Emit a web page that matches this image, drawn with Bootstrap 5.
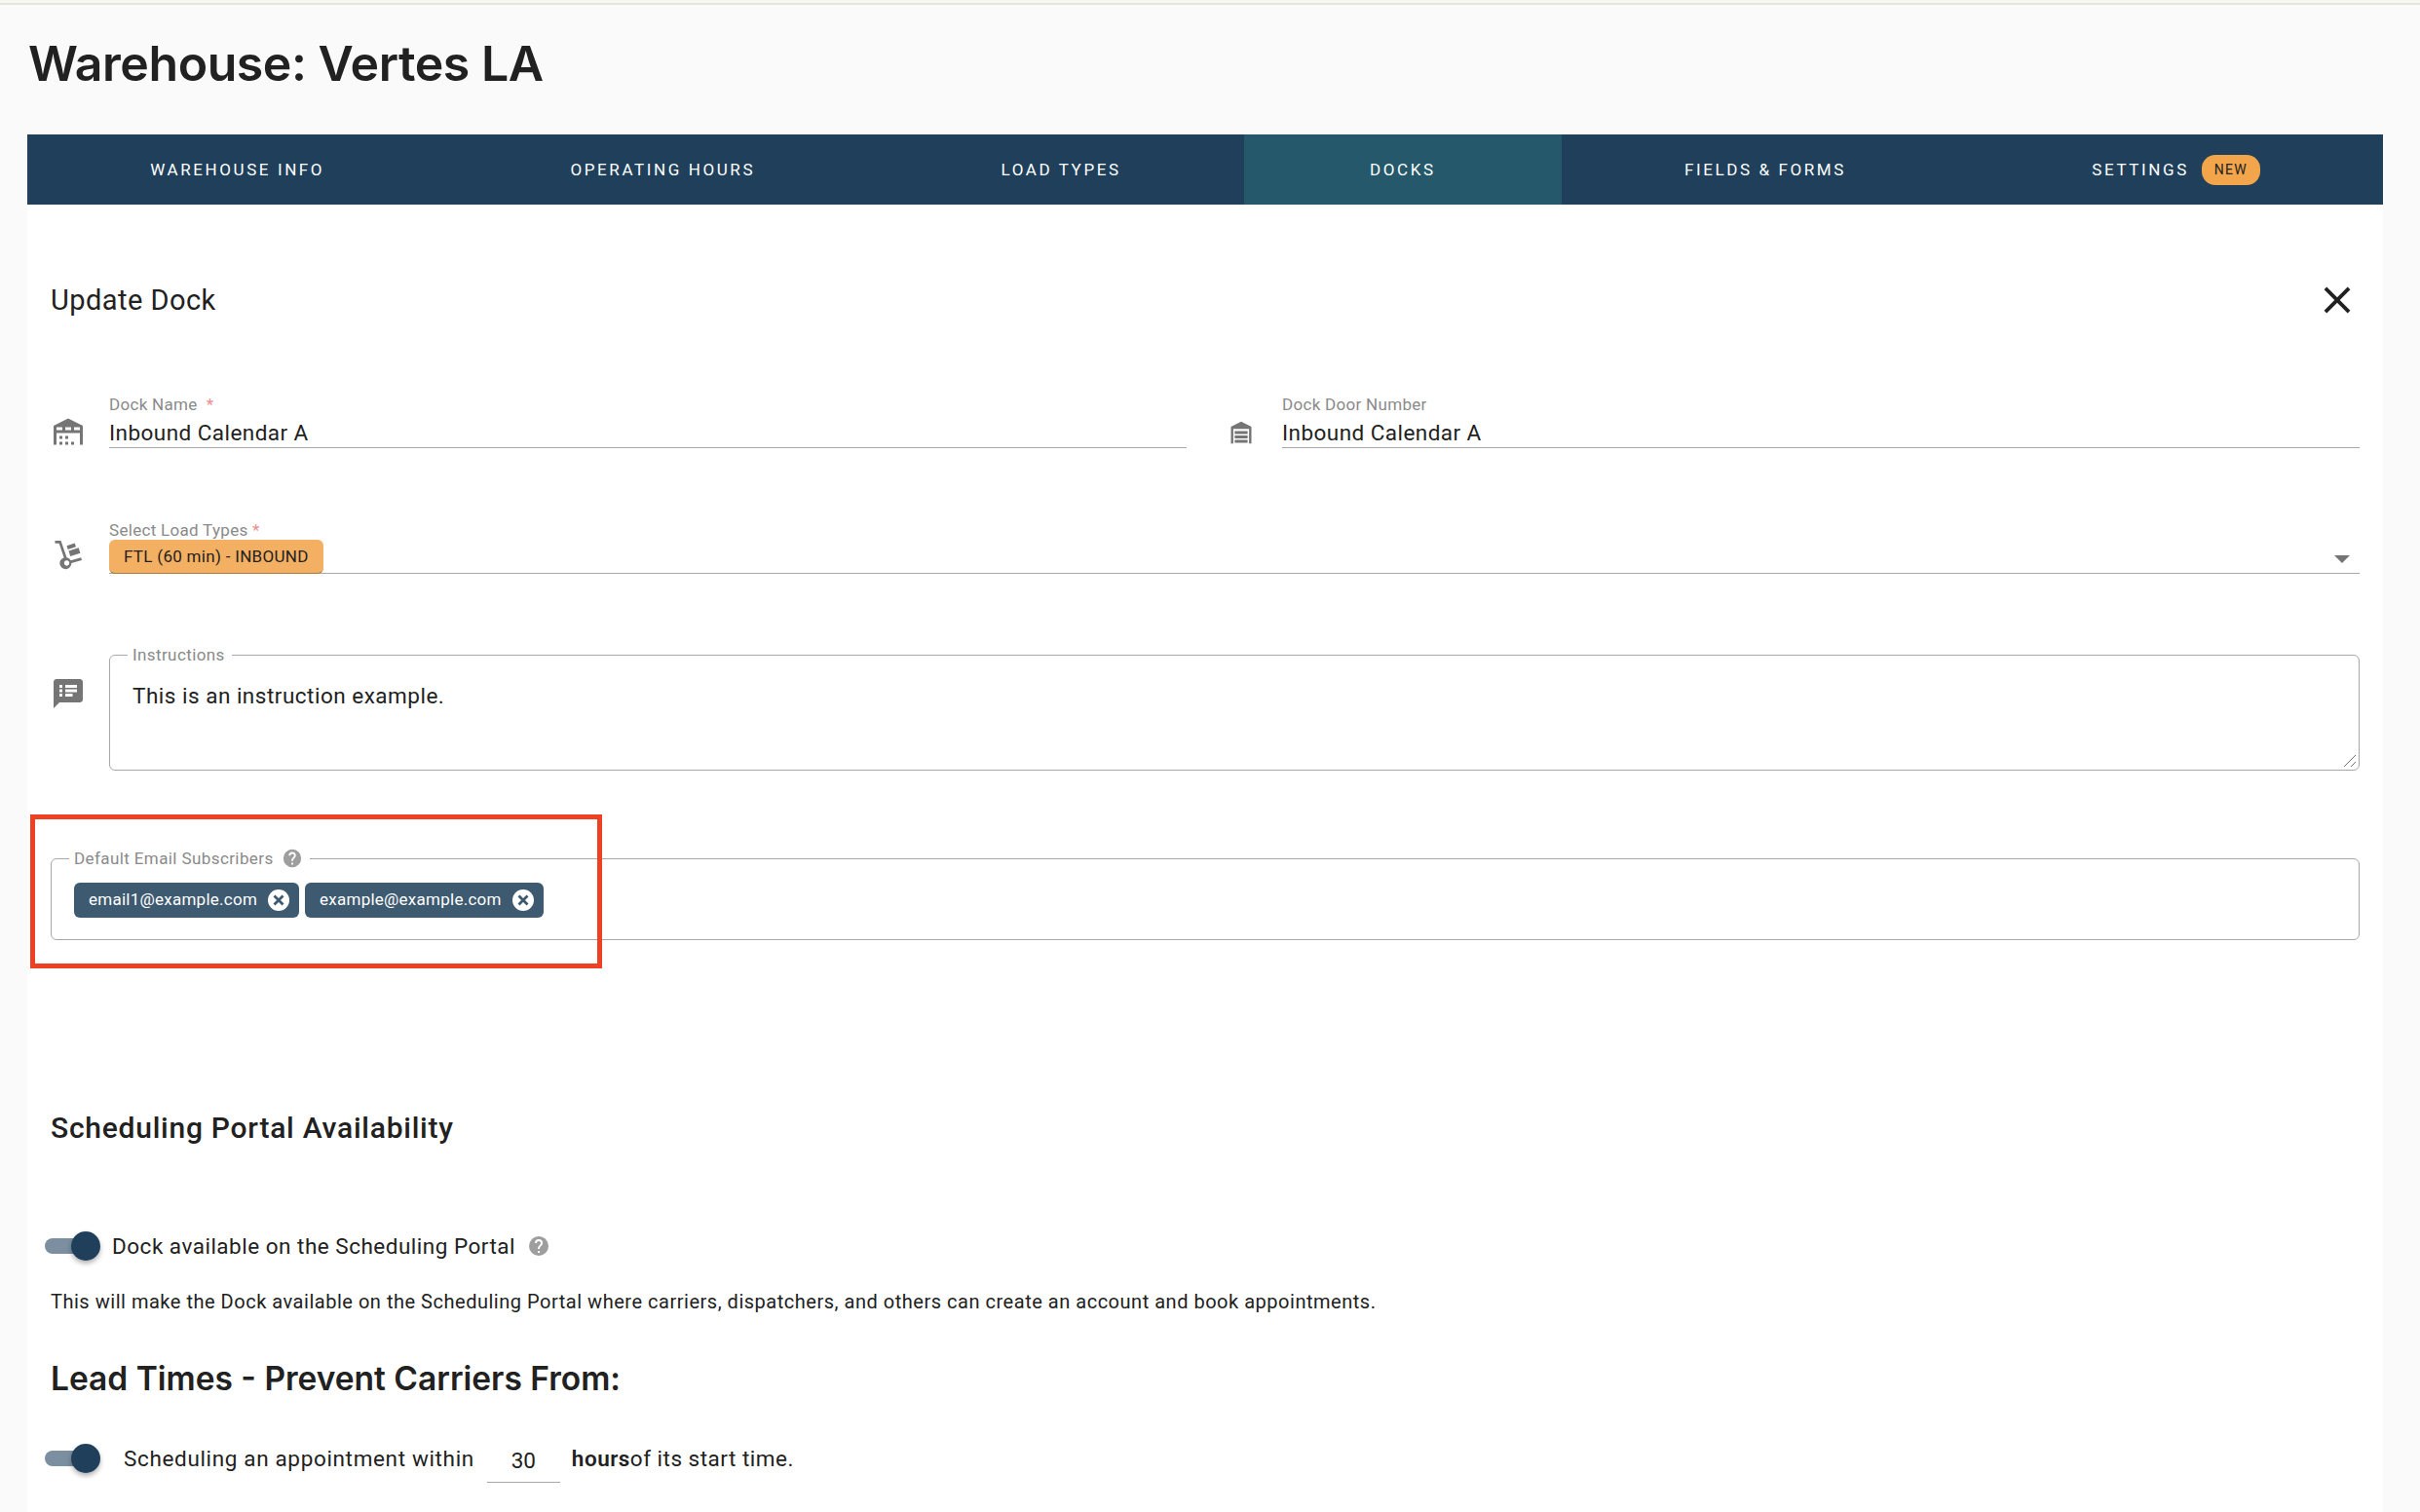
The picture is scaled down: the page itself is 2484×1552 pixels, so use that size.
<!DOCTYPE html>
<html lang="en">
<head>
<meta charset="utf-8">
<title>Warehouse: Vertes LA</title>
<link href="https://cdn.jsdelivr.net/npm/bootstrap@5.3.0/dist/css/bootstrap.min.css" rel="stylesheet">
<style>
html,body{height:100%;overflow:hidden}
body{background:#fafafa;font-family:Roboto,"Liberation Sans",sans-serif;color:#212121;position:relative;font-size:20px}
.topstrip{height:5px;background:#f7f8f0;border-bottom:2px solid #e5e7dc}
.pagewrap{padding:0 38px 0 28px}
.pagetitle{font-family:Inter,sans-serif;font-weight:600;font-size:50px;line-height:60px;margin:0;padding:30px 0 43px 1px;letter-spacing:-.45px}
.tabbar{background:#1f3f5b;height:72px}
.tabitem{display:flex;align-items:center;justify-content:center;gap:13px;color:#fff;font-size:17px;letter-spacing:2.6px;text-transform:uppercase;text-decoration:none;white-space:nowrap;padding-top:1px}
.tabitem.is-on{background:#25586b;padding-left:3px;padding-right:3px}
.newpill{background:#f2a54a;color:#212121;font-size:14px;letter-spacing:1.2px;border-radius:14px;padding:0 13px;height:31px;display:flex;align-items:center}
.sheet{background:#fff;padding:62px 24px 0;height:1342px}
.sheethead{height:72px}
.sheettitle{font-size:29px;font-weight:400;margin:0;letter-spacing:.45px}
.closex{width:46px;height:46px}
.fieldicon{width:36px;flex:0 0 36px;fill:#757575;display:block}
.iconlow{margin-bottom:-2px}
.undfield{flex:1 1 0;border-bottom:1px solid #a8a8a8;min-width:0}
.smlabel{display:block;font-size:17px;line-height:20px;color:#8a8a8a;letter-spacing:.3px}
.reqmark{color:#ee8d8d}
.undval{font-size:22.500px;line-height:28px;height:34px;letter-spacing:.45px;padding-top:5px}
.namerow{margin-top:56px;height:60px;gap:38px}
.namecol{flex:1 1 0;min-width:0}
.loadrow{margin-top:63px;height:66px}
.loadchip{background:#f4b062;color:#212121;font-size:17px;letter-spacing:.3px;line-height:35px;height:35px;padding:0 15px;border-radius:6px;border-bottom:1px solid #a97a3c;display:inline-block;margin-bottom:-1px}
.caretmark{width:0;height:0;border-left:8px solid transparent;border-right:8px solid transparent;border-top:8px solid #757575;margin-right:10px;margin-top:5px}
.framed{border:1px solid #a8a8a8;border-radius:6px;margin:0;padding:0 23px;position:relative;min-width:0}
.framed legend{float:none;width:auto;font-size:17px;line-height:20px;color:#8a8a8a;letter-spacing:.4px;padding:0 7px 0 5px;margin:-10px 0 0 -5px;display:flex;align-items:center;gap:8px}
.instrrow{margin-top:73px}
.instricon{margin-top:32px}
.instrbox{flex:1 1 0;height:129px}
.instrtext{font-size:22.500px;line-height:28px;padding-top:18px;margin:0;letter-spacing:.5px}
.gripper{position:absolute;right:2px;bottom:2px;width:14px;height:14px}
.emailbox{height:94px;margin-top:80px}
.emailchips{padding-top:15px;gap:6px}
.mailchip{background:#3e5a70;color:#fff;font-size:17px;letter-spacing:.25px;height:36px;border-radius:6px;padding:0 9px 0 15px;display:flex;align-items:center;gap:10px}
.chipx{width:24px;height:24px;display:block}
.helpdot{width:22px;height:22px;display:block;margin:-1px 0}
.helpbig{width:24px;height:24px}
.secthead{font-weight:500;font-size:30px;line-height:40px;margin:173px 0 0 0;letter-spacing:.75px}
.swrow{gap:12px;height:30px}
.swtrack{width:57px;height:30px;position:relative;margin-left:-6px;flex:0 0 57px}
.swtrack::before{content:"";position:absolute;left:0;top:7px;width:50px;height:16px;border-radius:8px;background:#7b8fa1}
.swtrack::after{content:"";position:absolute;right:0;top:0;width:30px;height:30px;border-radius:50%;background:#1f3f5b;box-shadow:0 3px 5px rgba(0,0,0,.3)}
.availrow{margin-top:86px}
.bodytxt{font-size:22.500px;line-height:30px;letter-spacing:.5px}
.widertxt{letter-spacing:.65px}
.desctxt{font-size:20px;line-height:28px;margin:28px 0 0;letter-spacing:.52px}
.leadhead{font-family:Inter,sans-serif;font-weight:600;font-size:33.500px;line-height:42px;margin:44px 0 0}
.leadrow{margin-top:46px}
.hoursval{width:75px;height:40px;margin:10px 0 0 1px;border-bottom:1px solid #a8a8a8;text-align:center;line-height:34px;font-size:22.500px}
.redframe{position:absolute;left:31px;top:836px;width:587px;height:158px;border:5px solid #ee4023;pointer-events:none}
</style>
</head>
<body>
<div class="topstrip"></div>
<div class="pagewrap">
  <h1 class="pagetitle">Warehouse: Vertes LA</h1>
  <nav class="tabbar d-flex">
    <a class="tabitem flex-fill" href="#">Warehouse Info</a>
    <a class="tabitem flex-fill" href="#">Operating Hours</a>
    <a class="tabitem flex-fill" href="#">Load Types</a>
    <a class="tabitem flex-fill is-on" href="#">Docks</a>
    <a class="tabitem flex-fill" href="#">Fields &amp; Forms</a>
    <a class="tabitem flex-fill" href="#">Settings <span class="newpill">NEW</span></a>
  </nav>
  <main class="sheet">
    <div class="sheethead d-flex justify-content-between align-items-center">
      <h2 class="sheettitle">Update Dock</h2>
      <svg class="closex" viewBox="0 0 24 24" fill="#212121"><path d="M19 6.41 17.59 5 12 10.59 6.41 5 5 6.41 10.59 12 5 17.59 6.41 19 12 13.41 17.59 19 19 17.59 13.41 12z"/></svg>
    </div>
    <div class="namerow d-flex">
      <div class="namecol d-flex align-items-end">
        <svg class="fieldicon iconlow" viewBox="0 0 24 24" width="36" height="38"><path d="M6 19H8V21H6V19M12 3L2 8V21H4V13H20V21H22V8L12 3M8 11H4V9H8V11M14 11H10V9H14V11M20 11H16V9H20V11M6 15H8V17H6V15M10 15H12V17H10V15M10 19H12V21H10V19M14 19H16V21H14V19Z"/></svg>
        <div class="undfield ms-4"><label class="smlabel">Dock Name &nbsp;<span class="reqmark">*</span></label><div class="undval">Inbound Calendar A</div></div>
      </div>
      <div class="namecol d-flex align-items-end">
        <svg class="fieldicon iconlow" viewBox="0 0 24 24" width="36" height="36"><path fill-rule="evenodd" d="M12 4.500 19 8v11.500H5V8zM6.600 9.500V19.500H17.400V9.500zM7.600 11h8.800v2H7.600zM7.600 14h8.800v2H7.600zM7.600 17h8.800v2H7.600z"/></svg>
        <div class="undfield ms-4"><label class="smlabel">Dock Door Number</label><div class="undval">Inbound Calendar A</div></div>
      </div>
    </div>
    <div class="loadrow d-flex align-items-end">
      <svg class="fieldicon mb-1" viewBox="0 0 24 24" width="36" height="36"><path d="M3 4h4l4 11.500a4 4 0 0 1 2.800 2l7-2 .5 1.800-7.100 2a4 4 0 1 1-5.100-3.700L5.800 5.800H3zM11 17.500a1.800 1.800 0 1 0 .01 0zM11 7.500l5.500-1.800.8 2.500-5.500 1.800zM12.300 11l6.800-2.200 1.200 3.700-6.800 2.200z"/></svg>
      <div class="undfield ms-4">
        <label class="smlabel">Select Load Types <span class="reqmark">*</span></label>
        <div class="d-flex justify-content-between align-items-center"><span class="loadchip">FTL (60 min) - INBOUND</span><span class="caretmark"></span></div>
      </div>
    </div>
    <div class="instrrow d-flex align-items-start">
      <svg class="fieldicon instricon" viewBox="0 0 24 24" width="36" height="36"><path d="M20 2H4c-1.100 0-1.990.9-1.990 2L2 22l4-4h14c1.100 0 2-.9 2-2V4c0-1.100-.9-2-2-2zM8 14H6v-2h2v2zm0-3H6V9h2v2zm0-3H6V6h2v2zm7 6h-5v-2h5v2zm3-3h-8V9h8v2zm0-3h-8V6h8v2z"/></svg>
      <fieldset class="framed instrbox ms-4">
        <legend>Instructions</legend>
        <p class="instrtext">This is an instruction example.</p>
        <svg class="gripper" viewBox="0 0 14 14" stroke="#757575" fill="none"><path d="M1 13 13 1M8 13l5-5"/></svg>
      </fieldset>
    </div>
    <fieldset class="framed emailbox">
      <legend>Default Email Subscribers <svg class="helpdot" viewBox="0 0 24 24" fill="#9e9e9e"><path d="M12 2a10 10 0 1 0 0 20 10 10 0 0 0 0-20zm1 17h-2v-2h2zm2.070-7.750-.9.920C13.450 12.900 13 13.500 13 15h-2v-.5c0-1.100.45-2.100 1.170-2.830l1.240-1.260A2 2 0 1 0 10 9H8a4 4 0 1 1 8 0c0 .88-.36 1.680-.93 2.250z"/></svg></legend>
      <div class="emailchips d-flex">
        <span class="mailchip">email1@example.com <svg class="chipx" viewBox="0 0 24 24"><circle cx="12" cy="12" r="11" fill="#fff"/><path d="M7.500 7.500l9 9m0-9-9 9" stroke="#3e5a70" stroke-width="2.800"/></svg></span>
        <span class="mailchip">example@example.com <svg class="chipx" viewBox="0 0 24 24"><circle cx="12" cy="12" r="11" fill="#fff"/><path d="M7.500 7.500l9 9m0-9-9 9" stroke="#3e5a70" stroke-width="2.800"/></svg></span>
      </div>
    </fieldset>
    <h3 class="secthead">Scheduling Portal Availability</h3>
    <div class="availrow swrow d-flex align-items-center">
      <span class="swtrack"></span>
      <span class="bodytxt">Dock available on the Scheduling Portal</span>
      <svg class="helpdot helpbig" viewBox="0 0 24 24" fill="#9e9e9e"><path d="M12 2a10 10 0 1 0 0 20 10 10 0 0 0 0-20zm1 17h-2v-2h2zm2.070-7.750-.9.920C13.450 12.900 13 13.500 13 15h-2v-.5c0-1.100.45-2.100 1.170-2.830l1.240-1.260A2 2 0 1 0 10 9H8a4 4 0 1 1 8 0c0 .88-.36 1.680-.93 2.250z"/></svg>
    </div>
    <p class="desctxt">This will make the Dock available on the Scheduling Portal where carriers, dispatchers, and others can create an account and book appointments.</p>
    <h3 class="leadhead">Lead Times - Prevent Carriers From:</h3>
    <div class="leadrow swrow d-flex align-items-center">
      <span class="swtrack"></span>
      <span class="bodytxt widertxt ms-2 ps-1">Scheduling an appointment within</span>
      <span class="hoursval">30</span>
      <span class="bodytxt"><b class="fw-semibold">hours</b>of its start time.</span>
    </div>
  </main>
</div>
<div class="redframe"></div>
<script src="https://cdn.jsdelivr.net/npm/bootstrap@5.3.0/dist/js/bootstrap.bundle.min.js"></script>
</body>
</html>
